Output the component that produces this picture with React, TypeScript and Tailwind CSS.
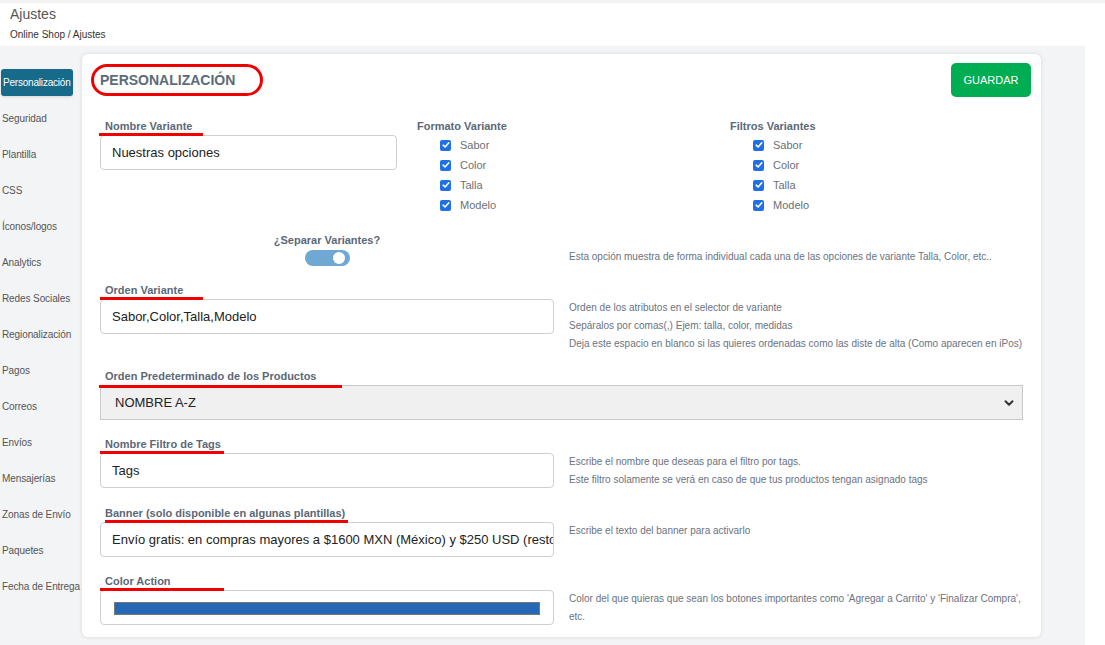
import React from 'react';

const menu = [
  'Personalización',
  'Seguridad',
  'Plantilla',
  'CSS',
  'Íconos/logos',
  'Analytics',
  'Redes Sociales',
  'Regionalización',
  'Pagos',
  'Correos',
  'Envíos',
  'Mensajerías',
  'Zonas de Envío',
  'Paquetes',
  'Fecha de Entrega',
];

const options = ['Sabor', 'Color', 'Talla', 'Modelo'];

function Check({ label }: { label: string }) {
  return (
    <div className="flex h-[20px] items-center pl-[23px]">
      <span className="flex h-[11px] w-[11px] items-center justify-center rounded-[2px] bg-[#1f6fe5]">
        <svg width="8" height="8" viewBox="0 0 8 8" fill="none">
          <path d="M1.2 4.2 3.1 6 6.8 1.8" stroke="#fff" strokeWidth="1.6" strokeLinecap="round" strokeLinejoin="round" />
        </svg>
      </span>
      <span className="ml-[9px] text-[11px] text-[#6b6f76]">{label}</span>
    </div>
  );
}

function Label({ text, line, offset = 0 }: { text: string; line: number; offset?: number }) {
  return (
    <>
      <div className="h-[13px] pl-[5px] text-[11px] font-bold leading-[13px] text-[#5b6878]">{text}</div>
      <div
        className="relative z-10 -mb-[1px] h-[3px] bg-[#f20000]"
        style={{ width: line, marginLeft: offset }}
      />
    </>
  );
}

function TextBox({ value }: { value: string }) {
  return (
    <input
      readOnly
      value={value}
      className="block h-[35px] w-full rounded-[4px] border border-[#cfcfcf] bg-white pl-[11px] text-[13px] text-[#222] outline-none"
    />
  );
}

function Notes({ lines }: { lines: React.ReactNode[] }) {
  return (
    <div className="pt-[15px] text-[10px] leading-[18px] text-[#6b7280]">
      {lines.map((l, i) => (
        <div key={i}>{l}</div>
      ))}
    </div>
  );
}

export default function App() {
  return (
    <div className="h-[645px] w-[1105px] overflow-hidden bg-white font-['Liberation_Sans',Arial,sans-serif]">
      <div className="h-[3px] bg-[#f2f2f2]" />
      <header className="h-[43px] bg-white pl-[10px] pt-[3px]">
        <div className="text-[14px] leading-[16px] text-[#555]">Ajustes</div>
        <div className="mt-[7px] text-[10px] leading-[12px] text-[#333]">Online Shop / Ajustes</div>
      </header>

      <div className="flex h-[599px] w-[1085px] bg-[#f3f4f6]">
        {/* Sidebar */}
        <aside className="flex w-[82px] shrink-0 flex-col gap-[9px] pt-[23px]">
          {menu.map((m, i) => (
            <div
              key={m}
              className={
                i === 0
                  ? 'ml-[1px] flex h-[27px] w-[72px] items-center overflow-hidden whitespace-nowrap rounded-[3px] bg-[#176a89] px-[2px] text-[10px] tracking-[-0.2px] text-white shadow-sm'
                  : 'ml-[1px] flex h-[27px] items-center whitespace-nowrap px-[1px] text-[10px] tracking-[-0.1px] text-[#555]'
              }
            >
              {m}
            </div>
          ))}
        </aside>

        {/* Card */}
        <main className="mt-[8px] h-fit w-[959px] rounded-[6px] bg-white pb-[11px] shadow-[0_0_4px_rgba(0,0,0,0.12)]">
          <div className="mt-[9px] flex h-[34px] items-center justify-between px-[9px] pr-[10px]">
            <div className="flex h-[32px] w-[172px] items-center rounded-full border-[3px] border-[#f20000] pl-[6px]">
              <span className="text-[14px] font-bold text-[#5c6b7a]">PERSONALIZACIÓN</span>
            </div>
            <button className="h-[34px] w-[80px] rounded-[5px] bg-[#00ad52] text-[11px] text-white">GUARDAR</button>
          </div>

          <div className="mt-[23px] px-[18px]">
            {/* Row 1 */}
            <div className="grid grid-cols-[317px_313px_1fr]">
              <div className="w-[297px]">
                <Label text="Nombre Variante" line={104} offset={-1} />
                <TextBox value="Nuestras opciones" />
              </div>
              <div>
                <div className="h-[13px] text-[11px] font-bold leading-[13px] text-[#5b6878]">Formato Variante</div>
                <div className="mt-[2px]">
                  {options.map((o) => (
                    <Check key={o} label={o} />
                  ))}
                </div>
              </div>
              <div>
                <div className="h-[13px] text-[11px] font-bold leading-[13px] text-[#5b6878]">Filtros Variantes</div>
                <div className="mt-[2px]">
                  {options.map((o) => (
                    <Check key={o} label={o} />
                  ))}
                </div>
              </div>
            </div>

            {/* Row 2 */}
            <div className="mt-[19px] grid grid-cols-[454px_1fr] items-end gap-x-[15px]">
              <div className="flex flex-col items-center">
                <div className="h-[13px] text-[11px] font-bold leading-[13px] text-[#5b6878]">¿Separar Variantes?</div>
                <div className="mt-[3px] flex h-[16px] w-[45px] items-center justify-end rounded-full bg-[#6fa8d3] pr-[5px]">
                  <span className="h-[12px] w-[12px] rounded-full bg-white" />
                </div>
              </div>
              <div className="text-[10px] leading-[18px] text-[#6b7280]">
                Esta opción muestra de forma individual cada una de las opciones de variante Talla, Color, etc..
              </div>
            </div>

            {/* Row 3 */}
            <div className="mt-[18px] grid grid-cols-[454px_1fr] gap-x-[15px]">
              <div>
                <Label text="Orden Variante" line={103} />
                <TextBox value="Sabor,Color,Talla,Modelo" />
              </div>
              <Notes
                lines={[
                  'Orden de los atributos en el selector de variante',
                  'Sepáralos por comas(,) Ejem: talla, color, medidas',
                  'Deja este espacio en blanco si las quieres ordenadas como las diste de alta (Como aparecen en iPos)',
                ]}
              />
            </div>

            {/* Row 4 */}
            <div className="mt-[17px]">
              <div className="h-[13px] pl-[5px] text-[11px] font-bold leading-[13px] text-[#5b6878]">
                Orden Predeterminado de los Productos
              </div>
              <div className="relative z-10 -mb-[3px] -ml-[1px] mt-[2px] h-[3px] w-[243px] bg-[#f20000]" />
              <div className="flex h-[35px] items-center justify-between border border-[#c8c8c8] bg-[#f0f0f0] pl-[14px] pr-[8px]">
                <span className="text-[13px] text-[#222]">NOMBRE A-Z</span>
                <svg width="10" height="10" viewBox="0 0 10 10" fill="none">
                  <path d="M1.5 3.2 5 6.7l3.5-3.5" stroke="#333" strokeWidth="2" strokeLinecap="round" strokeLinejoin="round" />
                </svg>
              </div>
            </div>

            {/* Row 5 */}
            <div className="mt-[18px] grid grid-cols-[454px_1fr] gap-x-[15px]">
              <div>
                <Label text="Nombre Filtro de Tags" line={124} />
                <TextBox value="Tags" />
              </div>
              <Notes
                lines={[
                  'Escribe el nombre que deseas para el filtro por tags.',
                  'Este filtro solamente se verá en caso de que tus productos tengan asignado tags',
                ]}
              />
            </div>

            {/* Row 6 */}
            <div className="mt-[18px] grid grid-cols-[454px_1fr] gap-x-[15px]">
              <div>
                <Label text="Banner (solo disponible en algunas plantillas)" line={243} offset={5} />
                <TextBox value="Envío gratis: en compras mayores a $1600 MXN (México) y $250 USD (resto del mundo)" />
              </div>
              <Notes lines={['Escribe el texto del banner para activarlo']} />
            </div>

            {/* Row 7 */}
            <div className="mt-[18px] grid grid-cols-[454px_1fr] gap-x-[15px]">
              <div>
                <Label text="Color Action" line={124} />
                <div className="flex h-[35px] items-center rounded-[4px] border border-[#cfcfcf] bg-white px-[13px] pt-[2px]">
                  <div className="h-[13px] w-full border border-[#777] bg-[#2668b6]" />
                </div>
              </div>
              <Notes
                lines={[
                  "Color del que quieras que sean los botones importantes como 'Agregar a Carrito' y 'Finalizar Compra',",
                  'etc.',
                ]}
              />
            </div>
          </div>
        </main>
      </div>
    </div>
  );
}
